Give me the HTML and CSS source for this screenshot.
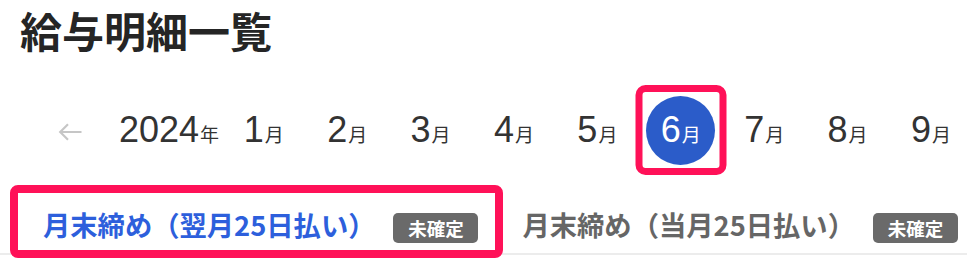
FILE: index.html
```html
<!DOCTYPE html>
<html lang="ja">
<head>
<meta charset="utf-8">
<title>給与明細一覧</title>
<link rel="stylesheet" href="styles.css">
</head>
<body>
<main class="page">
  <h1 class="page-title">給与明細一覧</h1>
  <nav class="month-nav">
    <span class="nav-arrow" aria-label="前年">
      <svg width="24" height="18" viewBox="0 0 24 18"><path d="M23.5 9H2M10 1.2L2.2 9l7.8 7.8" fill="none" stroke="#c6c6c6" stroke-width="2.2"/></svg>
    </span>
    <span class="year">2024<span class="unit">年</span></span>
    <ul class="months">
      <li class="month"><span class="label">1<span class="unit">月</span></span></li>
      <li class="month"><span class="label">2<span class="unit">月</span></span></li>
      <li class="month"><span class="label">3<span class="unit">月</span></span></li>
      <li class="month"><span class="label">4<span class="unit">月</span></span></li>
      <li class="month"><span class="label">5<span class="unit">月</span></span></li>
      <li class="month month-current"><span class="month-circle"><span class="label">6<span class="unit">月</span></span></span></li>
      <li class="month"><span class="label">7<span class="unit">月</span></span></li>
      <li class="month"><span class="label">8<span class="unit">月</span></span></li>
      <li class="month"><span class="label">9<span class="unit">月</span></span></li>
    </ul>
  </nav>
  <div class="tabs">
    <div class="tab tab-active">
      <span class="tab-label">月末締め（翌月25日払い）</span>
      <span class="badge">未確定</span>
    </div>
    <div class="tab">
      <span class="tab-label">月末締め（当月25日払い）</span>
      <span class="badge">未確定</span>
    </div>
  </div>
</main>
</body>
</html>
```

FILE: styles.css
```css
*, *::before, *::after { box-sizing: border-box; }
html, body { margin: 0; padding: 0; background: #fff; }
body {
  width: 967px;
  height: 259px;
  overflow: hidden;
  font-family: "Liberation Sans", "Noto Sans CJK JP", sans-serif;
  color: #333;
}

.page-title {
  margin: 0;
  padding: 7px 0 0 20px;
  height: 60px;
  font-family: "Noto Sans CJK JP", sans-serif;
  font-weight: 700;
  font-size: 42px;
  line-height: 46px;
  color: #252525;
  white-space: nowrap;
}

.month-nav {
  display: flex;
  align-items: center;
  height: 70px;
  margin-top: 35px;
  padding-left: 58px;
  white-space: nowrap;
}
.nav-arrow {
  display: flex;
  width: 24px;
  height: 18px;
  margin-top: 4px;
}
.year {
  margin-left: 37px;
  font-size: 36px;
  line-height: 1;
  color: #333;
}
.unit {
  font-family: "Noto Sans CJK JP", sans-serif;
  font-size: 19px;
  margin-left: 1px;
}
.months {
  display: flex;
  list-style: none;
  margin: 0 0 0 3px;
  padding: 0;
}
.month {
  width: 83.4px;
  height: 70px;
  display: flex;
  justify-content: center;
  align-items: center;
  font-size: 36px;
  line-height: 1;
  color: #333;
}
.label { display: block; }
.month-current { position: relative; }
.month-circle {
  display: flex;
  align-items: center;
  justify-content: center;
  width: 69px;
  height: 69px;
  border-radius: 50%;
  background: #2b5cc9;
  color: #fff;
}
.month-current::after {
  content: "";
  position: absolute;
  left: 50%;
  top: 50%;
  width: 91px;
  height: 90px;
  transform: translate(-50%, -50%);
  border: 7.5px solid #ff1158;
  border-radius: 10px;
}

.tabs {
  display: flex;
  margin-top: 20px;
  border-bottom: 2px solid #ececec;
  height: 70px;
}
.tab {
  position: relative;
  display: flex;
  align-items: center;
  flex: none;
  padding: 18px 22px 0 22px;
  height: 68px;
}
.tab:first-child { margin-left: 21px; }
.tab-label {
  font-family: "Noto Sans CJK JP", sans-serif;
  font-weight: 700;
  font-size: 27.3px;
  color: #666;
  margin-top: -8px;
}
.tab-active .tab-label { color: #2d5fdc; }
.badge {
  margin-left: 18px;
  display: inline-flex;
  align-items: center;
  justify-content: center;
  width: 85px;
  height: 30px;
  border-radius: 5px;
  background: #6a6a6a;
  color: #fff;
  font-family: "Noto Sans CJK JP", sans-serif;
  font-weight: 700;
  font-size: 18.5px;
  line-height: 1;
}
.tab-active::after {
  content: "";
  position: absolute;
  left: -11px;
  right: -3px;
  top: 0;
  bottom: -5px;
  border: 8px solid #ff1158;
  border-radius: 8px;
}
```
